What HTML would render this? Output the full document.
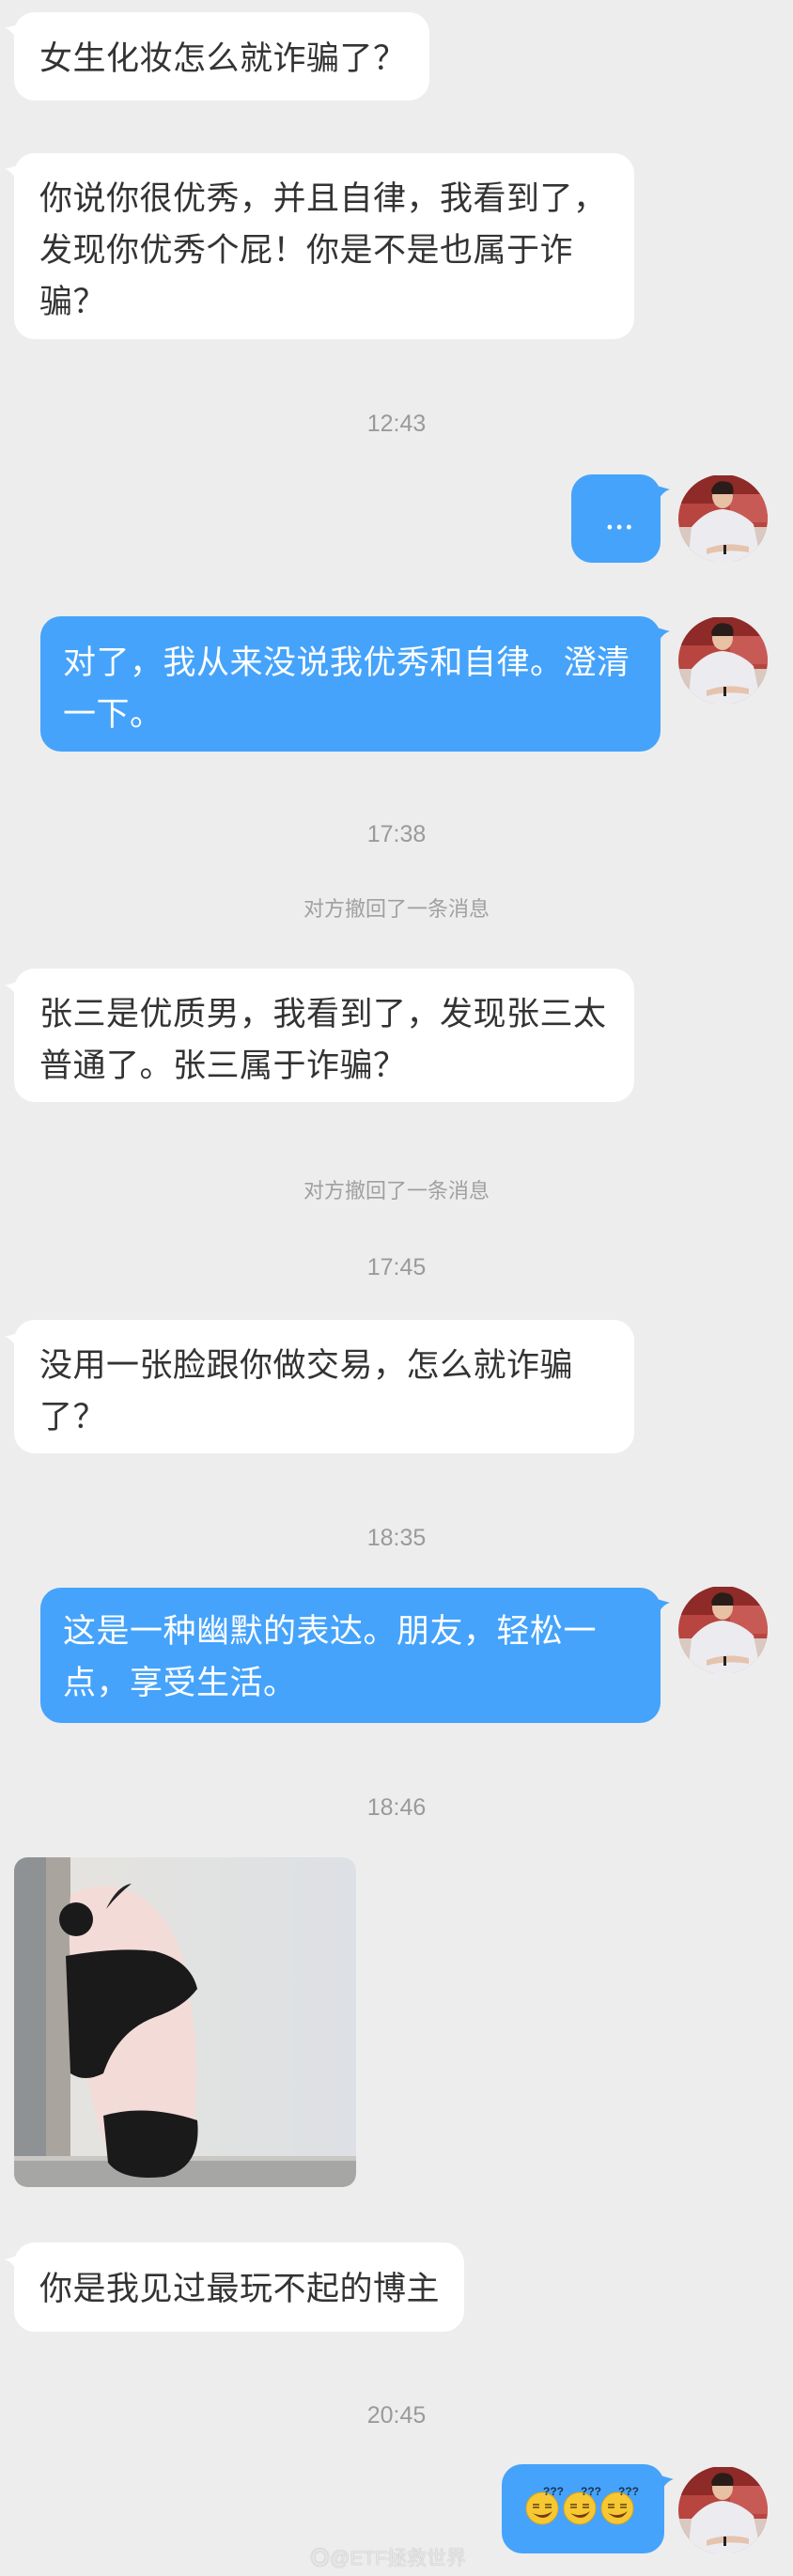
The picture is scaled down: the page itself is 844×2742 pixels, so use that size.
<!DOCTYPE html>
<html><head><meta charset="utf-8"><style>
*{margin:0;padding:0;box-sizing:border-box}
body{width:844px;height:2742px;background:#ededed;position:relative;overflow:hidden;font-family:"Liberation Sans","Noto Sans CJK SC",sans-serif}
.b{position:absolute;background:#fff;border-radius:22px;color:#333;font-size:35px;line-height:55px;letter-spacing:0.5px;padding:0 0 0 27px;font-family:"Noto Sans CJK SC",sans-serif;white-space:nowrap}
.blue{background:#45a3fb;color:#fff;padding-left:24px}
.t{position:absolute;left:0;width:844px;text-align:center;color:#9a9a9a;font-size:25px;font-family:"Liberation Sans",sans-serif}
.s{position:absolute;left:0;width:844px;text-align:center;color:#a0a0a0;font-size:22px;font-family:"Noto Sans CJK SC",sans-serif}
.av{position:absolute;left:722px;width:95px;height:94px;border-radius:50%;overflow:hidden}
</style></head><body>

<svg width="0" height="0" style="position:absolute"><defs>
<symbol id="ava" viewBox="0 0 95 92">
<rect width="95" height="92" fill="#b8453f"/>
<rect x="0" y="0" width="95" height="30" fill="#8e2a28"/>
<rect x="55" y="20" width="40" height="30" fill="#c85a55"/>
<rect x="0" y="55" width="95" height="37" fill="#d9c9c0"/>
<path d="M10 92 L14 55 Q30 36 48 36 Q66 38 80 52 L88 92 Z" fill="#ececf0"/>
<ellipse cx="47" cy="22" rx="11" ry="13" fill="#e8c0a4"/>
<path d="M35 16 Q40 2 55 8 Q60 12 58 20 L36 20 Z" fill="#2a1c18"/>
<path d="M30 78 Q50 70 75 76 L75 82 Q50 78 30 84 Z" fill="#e5c3ad"/>
<rect x="48" y="74" width="3" height="10" fill="#222"/>
</symbol>
<symbol id="emo" viewBox="0 0 44 44">
<circle cx="19" cy="25" r="17" fill="#f6c833" stroke="#d9a21c" stroke-width="1"/>
<path d="M9 21 h7 M9 24 h7 M22 21 h7 M22 24 h7" stroke="#7a5410" stroke-width="1.8"/>
<path d="M9 30 Q20 35 30 28 Q22 41 9 30Z" fill="#7a3a10"/>
<text x="20" y="11" font-size="12" font-family="Liberation Sans" font-weight="bold" fill="#1b3350">???</text>
</symbol>
</defs></svg>

<div class="b" style="left:15px;top:13px;width:442px;height:94px;padding-top:19px">女生化妆怎么就诈骗了？</div>
<svg style="position:absolute;left:5px;top:26px" width="14" height="18"><path d="M14 0 L0 4 Q8 6 14 18Z" fill="#fff"/></svg>

<div class="b" style="left:15px;top:163px;width:660px;height:198px;padding-top:18px">你说你很优秀，并且自律，我看到了，<br>发现你优秀个屁！你是不是也属于诈<br>骗？</div>
<svg style="position:absolute;left:5px;top:176px" width="14" height="18"><path d="M14 0 L0 4 Q8 6 14 18Z" fill="#fff"/></svg>

<div class="t" style="top:437px">12:43</div>

<div class="b blue" style="left:608px;top:505px;width:95px;height:94px;padding:16px 0 0 36px">...</div>
<svg style="position:absolute;left:699px;top:517px" width="14" height="18"><path d="M0 0 L14 4 Q6 6 0 18Z" fill="#45a3fb"/></svg>
<svg class="av" style="top:505px"><use href="#ava"/></svg>

<div class="b blue" style="left:43px;top:656px;width:660px;height:144px;padding-top:19px">对了，我从来没说我优秀和自律。澄清<br>一下。</div>
<svg style="position:absolute;left:699px;top:668px" width="14" height="18"><path d="M0 0 L14 4 Q6 6 0 18Z" fill="#45a3fb"/></svg>
<svg class="av" style="top:656px"><use href="#ava"/></svg>

<div class="t" style="top:874px">17:38</div>
<div class="s" style="top:950px">对方撤回了一条消息</div>

<div class="b" style="left:15px;top:1031px;width:660px;height:142px;padding-top:18px">张三是优质男，我看到了，发现张三太<br>普通了。张三属于诈骗？</div>
<svg style="position:absolute;left:5px;top:1045px" width="14" height="18"><path d="M14 0 L0 4 Q8 6 14 18Z" fill="#fff"/></svg>

<div class="s" style="top:1250px">对方撤回了一条消息</div>
<div class="t" style="top:1335px">17:45</div>

<div class="b" style="left:15px;top:1405px;width:660px;height:142px;padding-top:18px">没用一张脸跟你做交易，怎么就诈骗<br>了？</div>
<svg style="position:absolute;left:5px;top:1419px" width="14" height="18"><path d="M14 0 L0 4 Q8 6 14 18Z" fill="#fff"/></svg>

<div class="t" style="top:1623px">18:35</div>

<div class="b blue" style="left:43px;top:1690px;width:660px;height:144px;padding-top:16px">这是一种幽默的表达。朋友，轻松一<br>点，享受生活。</div>
<svg style="position:absolute;left:699px;top:1702px" width="14" height="18"><path d="M0 0 L14 4 Q6 6 0 18Z" fill="#45a3fb"/></svg>
<svg class="av" style="top:1688px"><use href="#ava"/></svg>

<div class="t" style="top:1910px">18:46</div>

<svg style="position:absolute;left:15px;top:1977px;border-radius:14px" width="364" height="351" viewBox="0 0 364 351">
<defs><clipPath id="rc"><rect width="364" height="351" rx="14"/></clipPath>
<linearGradient id="wall" x1="0" x2="1"><stop offset="0" stop-color="#e6e4df"/><stop offset="1" stop-color="#dde0e4"/></linearGradient></defs>
<g clip-path="url(#rc)">
<rect width="364" height="351" fill="url(#wall)"/>
<rect x="0" y="0" width="40" height="351" fill="#8e9294"/>
<rect x="34" y="0" width="26" height="351" fill="#a9a59e"/>
<rect x="0" y="320" width="364" height="31" fill="#a6a6a4"/>
<rect x="0" y="318" width="364" height="5" fill="#c9c8c4"/>
<path d="M60 40 Q100 18 140 45 Q180 80 185 140 Q198 200 192 280 Q185 330 140 336 Q105 338 95 300 Q75 240 70 180 Q55 120 60 40Z" fill="#f3dcd8"/>
<path d="M55 105 Q110 95 150 100 Q188 110 195 140 Q180 160 150 170 Q110 185 95 230 Q75 240 60 230 Z" fill="#1a1a1a"/>
<circle cx="66" cy="66" r="18" fill="#1a1a1a"/>
<path d="M98 55 Q110 30 125 28 Q110 40 98 55Z" fill="#222"/>
<path d="M95 275 Q140 262 195 280 Q200 330 160 340 Q115 345 100 325 Z" fill="#1a1a1a"/>
</g></svg>

<div class="b" style="left:15px;top:2387px;width:479px;height:95px;padding-top:19px">你是我见过最玩不起的博主</div>
<svg style="position:absolute;left:5px;top:2401px" width="14" height="18"><path d="M14 0 L0 4 Q8 6 14 18Z" fill="#fff"/></svg>

<div class="t" style="top:2557px">20:45</div>

<div class="b blue" style="left:534px;top:2623px;width:173px;height:95px;padding:0"></div>
<svg style="position:absolute;left:703px;top:2635px" width="14" height="18"><path d="M0 0 L14 4 Q6 6 0 18Z" fill="#45a3fb"/></svg>
<svg style="position:absolute;left:558px;top:2645px" width="44" height="44"><use href="#emo"/></svg>
<svg style="position:absolute;left:598px;top:2645px" width="44" height="44"><use href="#emo"/></svg>
<svg style="position:absolute;left:638px;top:2645px" width="44" height="44"><use href="#emo"/></svg>
<svg class="av" style="top:2625px"><use href="#ava"/></svg>

<div style="position:absolute;left:330px;top:2707px;color:#e6e6e6;font-size:21px;text-shadow:0 0 1px #999;font-family:'Liberation Sans','Noto Sans CJK SC',sans-serif">◎@ETF拯救世界</div>
</body></html>
